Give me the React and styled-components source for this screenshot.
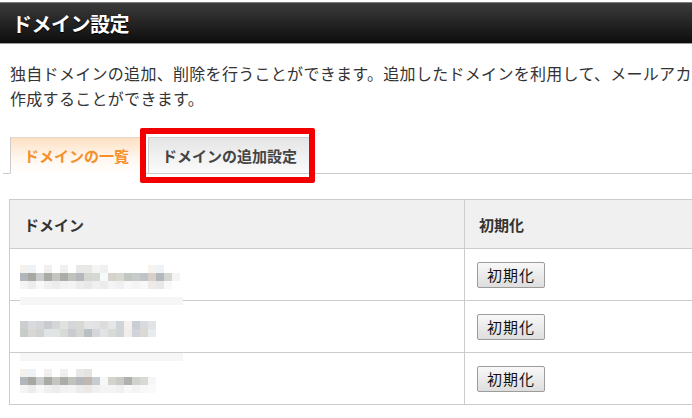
import React from 'react';
import styled, { createGlobalStyle } from 'styled-components';

const GlobalStyle = createGlobalStyle`
  html, body { margin: 0; padding: 0; background: #fff; overflow: hidden; }
  body { font-family: "Noto Sans CJK JP", "Noto Sans", sans-serif; color: #333; }
`;

const Page = styled.div`
  width: 780px;
  padding-top: 2px;
`;

const TitleBar = styled.header`
  height: 40px;
  border-top: 1px solid #7c7c7c;
  border-bottom: 1px solid #9a9a9a;
  background: linear-gradient(#3b3b3b, #0d0d0d);
  display: flex;
  align-items: center;
  padding-left: 12px;
`;

const Title = styled.h1`
  margin: 0;
  font-size: 20px;
  font-weight: 700;
  color: #fff;
  letter-spacing: -0.5px;
  text-shadow: 0 1px 1px #000;
`;

const Description = styled.p`
  margin: 17px 0 0;
  padding-left: 10px;
  font-size: 16px;
  line-height: 25px;
  letter-spacing: 0.3px;
  color: #333;
  white-space: nowrap;
`;

const TabBar = styled.nav`
  margin: 26px 0 0 3px;
  padding-left: 7px;
  display: flex;
  align-items: flex-end;
  gap: 5px;
  border-bottom: 1px solid #ccc;
`;

const Tab = styled.div`
  position: relative;
  box-sizing: border-box;
  height: 37px;
  margin-bottom: -1px;
  padding: 0 13px;
  display: flex;
  align-items: center;
  font-size: 15px;
  font-weight: 700;
  border: 1px solid #ccc;
  border-bottom: 1px solid ${p => (p.$active ? '#fff' : '#ccc')};
  border-top-color: ${p => (p.$active ? '#e3d6c8' : '#d0d0d0')};
  color: ${p => (p.$active ? '#f5902a' : '#444')};
  background: ${p =>
    p.$active
      ? 'linear-gradient(#fde0c2, #fff6ee 55%, #fff)'
      : 'linear-gradient(#e4e4e4, #f3f3f3 60%, #fafafa)'};
`;

const Highlight = styled.span`
  position: absolute;
  top: -10px;
  left: -9px;
  right: -5px;
  bottom: -10px;
  border: 6px solid #f20000;
  border-radius: 2px;
  pointer-events: none;
`;

const Table = styled.div`
  margin: 25px 0 0 9px;
  display: grid;
  grid-template-columns: 455px 300px;
  border-top: 1px solid #ccc;
  border-left: 1px solid #ccc;
`;

const HeadCell = styled.div`
  box-sizing: border-box;
  height: 49px;
  padding-left: 14px;
  display: flex;
  align-items: center;
  background: #f0f0f0;
  border-right: 1px solid #ccc;
  border-bottom: 1px solid #ccc;
  font-size: 15px;
  font-weight: 700;
  color: #333;
`;

const Cell = styled.div`
  box-sizing: border-box;
  height: 52px;
  padding-left: ${p => p.$pad}px;
  display: flex;
  align-items: center;
  border-right: 1px solid #ccc;
  border-bottom: 1px solid #ccc;
`;

const MosaicSvg = styled.svg`
  display: block;
  overflow: visible;
  margin-top: 4px;
`;

const ResetButton = styled.button`
  box-sizing: border-box;
  width: 68px;
  height: 26px;
  padding: 0;
  border: 1px solid #9c9c9c;
  border-radius: 2px;
  background: linear-gradient(#f8f8f8, #dedede);
  font-family: "Noto Sans CJK JP", sans-serif;
  font-size: 15px;
  font-weight: 400;
  letter-spacing: 1px;
  color: #111;
`;

const mosaics = [
  {
    band: true,
    rows: [
      ['#f4f0ea', '#eef2f6', '#ffffff', '#f0f0f0', '#ffffff', '#f0f0f0', '#ffffff', '#e8e8e6', '#e8e8e6', '#f4f4f4', '#f0f0f0', '#ffffff', '#ffffff', '#ffffff', '#ffffff', '#ffffff', '#f6f2ee', '#eef2f6', '#ffffff', '#ffffff'],
      ['#b0b6ba', '#a8a8a2', '#c8cccc', '#a8aaa4', '#c4c4c0', '#aaaca6', '#c0c0bc', '#b4b8bc', '#d4d6d0', '#d6d8d2', '#f4fafa', '#d4d4cc', '#d8d8d0', '#c4c6c2', '#c8ccc8', '#c0c4c6', '#d8d0c8', '#b4b8bc', '#d4d6d4', '#f4f4f4'],
      ['#f4f4f4', '#ececec', '#f8f8f8', '#f0f0f0', '#ececec', '#f2f2f2', '#f4f4f4', '#ececec', '#e8e8e8', '#f0f0f0', '#ececec', '#f4f4f4', '#f0f0f0', '#f8f8f8', '#f4f4f4', '#f8f8f8', '#eeeae6', '#e8e8e8', '#f8f8f8', '#ffffff'],
    ],
  },
  {
    band: true,
    rows: [
      ['#ccced0', '#d8dade', '#d4d6d8', '#c8ccd0', '#d4d6d8', '#e0e2e0', '#d4d6d8', '#d8d8d4', '#e4e4e4', '#e0e2e4', '#dcdcdc', '#e4e6e8', '#d0d4d8', '#f4f0ec', '#c8ccd4', '#d8dade', '#e0e4e6'],
      ['#c8ccc8', '#d8d8d4', '#d0d4d0', '#e0e4e4', '#e0e4e4', '#d8dad6', '#c8ccd0', '#d4d6d4', '#b8c0c4', '#d4d6d8', '#e0e4e4', '#d8dad8', '#d0d4d4', '#f0eeea', '#d0d4d8', '#dcd8d4', '#e4ecec'],
    ],
  },
  {
    band: false,
    rows: [
      ['#f4f0ea', '#eef2f6', '#ffffff', '#f0f0f0', '#ffffff', '#f0f0f0', '#ffffff', '#e8e8e6', '#e4e4e2', '#ffffff', '#ffffff', '#ffffff', '#ffffff', '#ffffff', '#ffffff', '#ffffff', '#ffffff'],
      ['#b0b6ba', '#a8a8a2', '#c8cccc', '#a8aaa4', '#c4c4c0', '#aaaca6', '#c0c0bc', '#b4b8bc', '#c0b8b0', '#c8ccd0', '#f4f8f8', '#d4d4cc', '#c8cac6', '#b0b0ac', '#d0d2cc', '#d8dad6', '#f6f6f6'],
      ['#f4f4f4', '#ececec', '#f8f8f8', '#f0f0f0', '#ececec', '#f2f2f2', '#f4f4f4', '#ececec', '#ece8e4', '#f0f0f0', '#f4f4f4', '#f4f4f4', '#f0f0f0', '#f8f8f8', '#f4f4f4', '#f8f8f8', '#fafafa'],
    ],
  },
];

function Mosaic({ data }) {
  const cols = data.rows[0].length;
  const w = cols * 8;
  const h = data.rows.length * 8;
  return (
    <MosaicSvg width={w} height={h} viewBox={`0 0 ${w} ${h}`}>
      {data.rows.map((row, r) =>
        row.map((c, i) => <rect key={`${r}-${i}`} x={i * 8} y={r * 8} width="8" height="8" fill={c} />)
      )}
      {data.band && <rect x="0" y="32" width="163" height="8" fill="#f6f6f6" />}
    </MosaicSvg>
  );
}

export default function App() {
  return (
    <Page>
      <GlobalStyle />
      <TitleBar>
        <Title>ドメイン設定</Title>
      </TitleBar>
      <Description>
        独自ドメインの追加、削除を行うことができます。追加したドメインを利用して、メールアカウントを
        <br />
        作成することができます。
      </Description>
      <TabBar>
        <Tab $active>ドメインの一覧</Tab>
        <Tab>
          ドメインの追加設定
          <Highlight />
        </Tab>
      </TabBar>
      <Table>
        <HeadCell>ドメイン</HeadCell>
        <HeadCell>初期化</HeadCell>
        {mosaics.map((m, i) => (
          <React.Fragment key={i}>
            <Cell $pad={10}>
              <Mosaic data={m} />
            </Cell>
            <Cell $pad={12}>
              <ResetButton type="button">初期化</ResetButton>
            </Cell>
          </React.Fragment>
        ))}
      </Table>
    </Page>
  );
}
